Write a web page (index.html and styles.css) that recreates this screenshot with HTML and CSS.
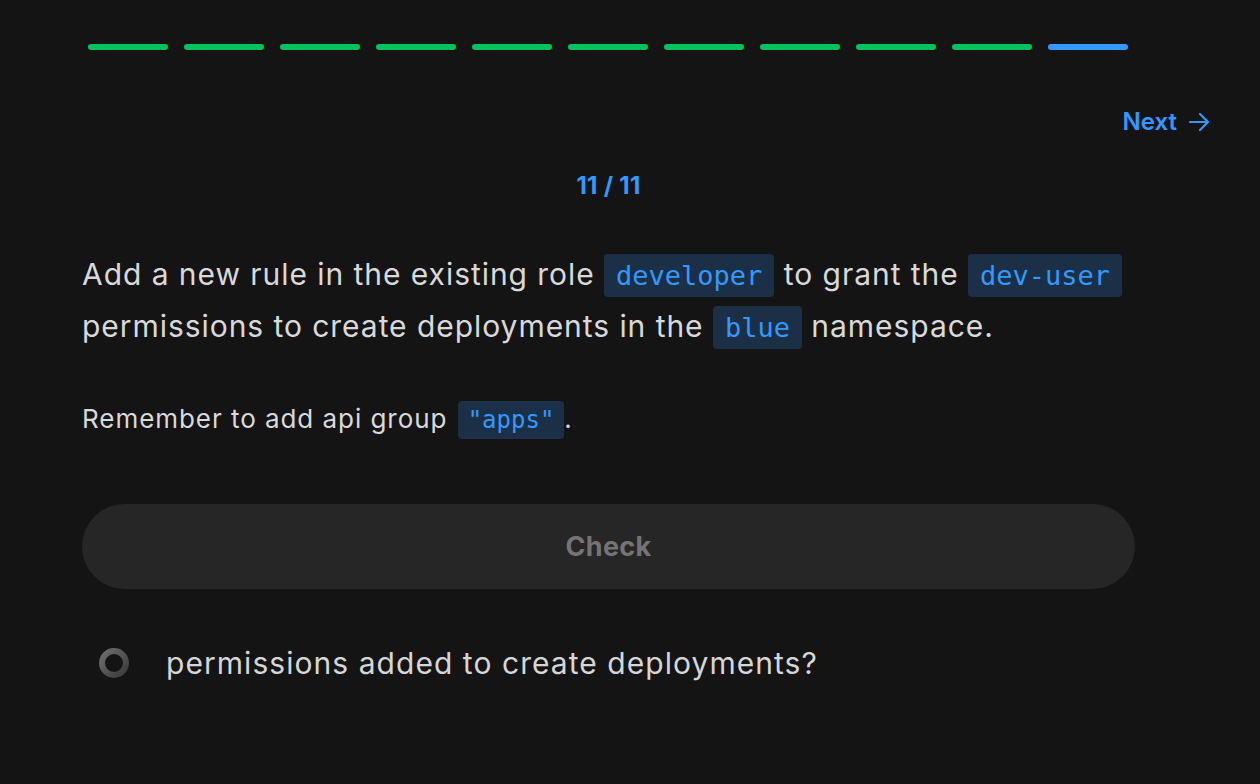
FILE: index.html
```html
<!DOCTYPE html>
<html>
<head>
<meta charset="utf-8">
<link rel="stylesheet" href="styles.css">
</head>
<body>
<div class="page">
  <div class="progress">
    <span class="seg done"></span><span class="seg done"></span><span class="seg done"></span><span class="seg done"></span><span class="seg done"></span><span class="seg done"></span><span class="seg done"></span><span class="seg done"></span><span class="seg done"></span><span class="seg done"></span><span class="seg current"></span>
  </div>
  <div class="nav">
    <a class="next">Next
      <svg class="arrow" width="24" height="24" viewBox="0 0 24 24" fill="none" stroke="currentColor" stroke-width="2.2" stroke-linecap="round" stroke-linejoin="round"><path d="M3 12h18M13 4l8 8-8 8"/></svg>
    </a>
  </div>
  <div class="content">
    <div class="counter">11 / 11</div>
    <p class="task">Add a new rule in the existing role <code>developer</code> to grant the <code>dev-user</code> permissions to create deployments in the <code>blue</code> namespace.</p>
    <p class="hint">Remember to add api group <code>"apps"</code>.</p>
    <button class="check">Check</button>
    <div class="result">
      <svg class="radio" width="32" height="32" viewBox="0 0 32 32">
        <defs>
          <linearGradient id="rg" x1="0" y1="0" x2="1" y2="1">
            <stop offset="0" stop-color="#6e6e6e"/>
            <stop offset="1" stop-color="#3a3a3a"/>
          </linearGradient>
        </defs>
        <circle cx="16" cy="16" r="12" fill="none" stroke="url(#rg)" stroke-width="6"/>
      </svg>
      <span class="result-text">permissions added to create deployments?</span>
    </div>
  </div>
</div>
</body>
</html>
```
FILE: styles.css
```css
html, body {
  margin: 0;
  padding: 0;
  background: #141414;
}
body {
  font-family: Inter, "Noto Sans", sans-serif;
  color: #d6d6d6;
  width: 1260px;
  height: 784px;
  overflow: hidden;
}
.page {
  padding-top: 44px;
}
.progress {
  display: flex;
  gap: 16px;
  padding-left: 88px;
}
.seg {
  width: 80px;
  height: 6px;
  border-radius: 3px;
  background: #00c25e;
}
.seg.current {
  background: #3399ff;
}
.nav {
  display: flex;
  justify-content: flex-end;
  padding-right: 49px;
  margin-top: 57px;
}
.next {
  display: flex;
  align-items: center;
  gap: 10px;
  color: #3399ff;
  font-weight: 600;
  font-size: 24px;
  line-height: 30px;
}
.content {
  width: 1053px;
  margin-left: 82px;
}
.counter {
  text-align: center;
  color: #3399ff;
  font-weight: 700;
  font-size: 24px;
  line-height: 30px;
  margin-top: 34px;
  letter-spacing: 0.3px;
}
.task {
  margin: 48px 0 0;
  font-size: 30px;
  letter-spacing: 0.95px;
  line-height: 50px;
  color: #d9d9d9;
}
code {
  font-family: "DejaVu Sans Mono", "Liberation Mono", monospace;
  font-size: 27px;
  letter-spacing: 0;
  color: #3399ff;
  background: #1b3046;
  border-radius: 4px;
  padding: 6px 12px;
}
.hint {
  margin: 46px 0 0;
  font-size: 26px;
  letter-spacing: 0.95px;
  line-height: 40px;
  color: #d9d9d9;
}
.hint code {
  font-size: 24px;
  padding: 5px 10px;
  margin-left: 2px;
}
.check {
  display: block;
  width: 100%;
  height: 85px;
  margin-top: 64px;
  border: none;
  border-radius: 43px;
  background: #262626;
  color: #747474;
  font-family: Inter, "Noto Sans", sans-serif;
  font-weight: 700;
  font-size: 27px;
  letter-spacing: 0.3px;
}
.result {
  display: flex;
  align-items: center;
  margin-top: 54px;
  padding-left: 16px;
}
.radio {
  display: block;
  flex: none;
}
.result-text {
  margin-left: 36px;
  font-size: 30px;
  letter-spacing: 1.05px;
  line-height: 40px;
  color: #d6d6d6;
}
```
